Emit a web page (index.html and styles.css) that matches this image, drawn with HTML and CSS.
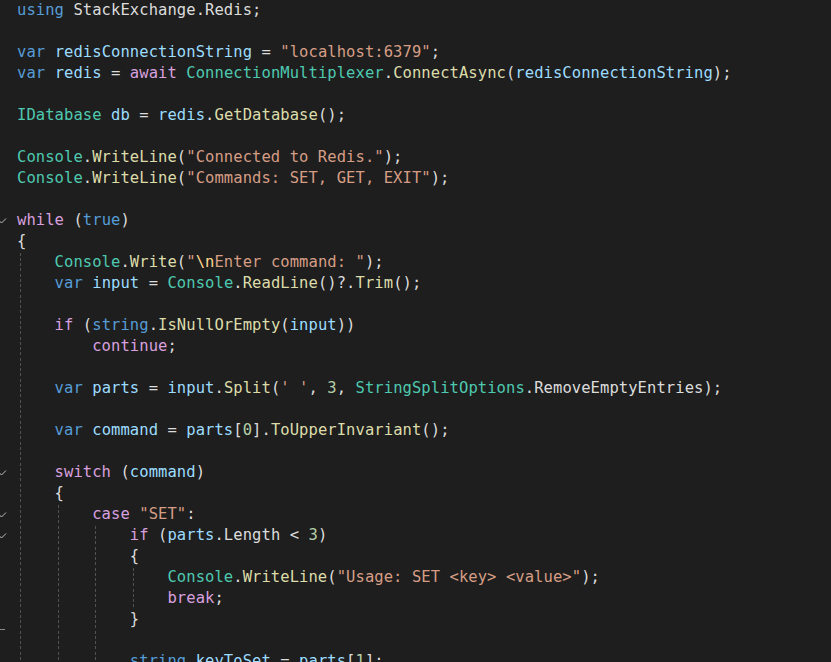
FILE: index.html
```html
<!DOCTYPE html>
<html>
<head>
<meta charset="utf-8">
<link rel="stylesheet" href="styles.css">
</head>
<body>
<div class="editor">
  <div class="gutter">
    <div class="g"></div><div class="g"></div><div class="g"></div><div class="g"></div><div class="g"></div>
    <div class="g"></div><div class="g"></div><div class="g"></div><div class="g"></div><div class="g"></div>
    <div class="g"><svg class="chev" width="7" height="8" viewBox="0 0 7 8"><path d="M-1 3.5 L1.5 6 L6 1.5" fill="none" stroke="#bdbdbd" stroke-width="1"/></svg></div>
    <div class="g"></div><div class="g"></div><div class="g"></div><div class="g"></div>
    <div class="g"></div><div class="g"></div><div class="g"></div><div class="g"></div><div class="g"></div>
    <div class="g"></div><div class="g"></div>
    <div class="g"><svg class="chev" width="7" height="8" viewBox="0 0 7 8"><path d="M-1 3.5 L1.5 6 L6 1.5" fill="none" stroke="#bdbdbd" stroke-width="1"/></svg></div>
    <div class="g"></div>
    <div class="g"><svg class="chev" width="7" height="8" viewBox="0 0 7 8"><path d="M-1 3.5 L1.5 6 L6 1.5" fill="none" stroke="#bdbdbd" stroke-width="1"/></svg></div>
    <div class="g"><svg class="chev" width="7" height="8" viewBox="0 0 7 8"><path d="M-1 3.5 L1.5 6 L6 1.5" fill="none" stroke="#bdbdbd" stroke-width="1"/></svg></div>
    <div class="g"></div><div class="g"></div><div class="g"></div>
    <div class="g end"></div>
    <div class="g"></div><div class="g"></div>
  </div>
  <div class="code">
<div class="ln"><span class="k">using</span> StackExchange.Redis;</div>
<div class="ln"></div>
<div class="ln"><span class="k">var</span> <span class="v">redisConnectionString</span> = <span class="s">"localhost:6379"</span>;</div>
<div class="ln"><span class="k">var</span> <span class="v">redis</span> = <span class="c">await</span> <span class="t">ConnectionMultiplexer</span>.<span class="m">ConnectAsync</span>(<span class="v">redisConnectionString</span>);</div>
<div class="ln"></div>
<div class="ln"><span class="t">IDatabase</span> <span class="v">db</span> = <span class="v">redis</span>.<span class="m">GetDatabase</span>();</div>
<div class="ln"></div>
<div class="ln"><span class="t">Console</span>.<span class="m">WriteLine</span>(<span class="s">"Connected to Redis."</span>);</div>
<div class="ln"><span class="t">Console</span>.<span class="m">WriteLine</span>(<span class="s">"Commands: SET, GET, EXIT"</span>);</div>
<div class="ln"></div>
<div class="ln"><span class="c">while</span> (<span class="k">true</span>)</div>
<div class="ln">{</div>
<div class="ln"><span class="ig">    </span><span class="t">Console</span>.<span class="m">Write</span>(<span class="s">"</span><span class="e">\n</span><span class="s">Enter command: "</span>);</div>
<div class="ln"><span class="ig">    </span><span class="k">var</span> <span class="v">input</span> = <span class="t">Console</span>.<span class="m">ReadLine</span>()?.<span class="m">Trim</span>();</div>
<div class="ln"><span class="ig">    </span></div>
<div class="ln"><span class="ig">    </span><span class="c">if</span> (<span class="k">string</span>.<span class="m">IsNullOrEmpty</span>(<span class="v">input</span>))</div>
<div class="ln"><span class="ig">    </span>    <span class="c">continue</span>;</div>
<div class="ln"><span class="ig">    </span></div>
<div class="ln"><span class="ig">    </span><span class="k">var</span> <span class="v">parts</span> = <span class="v">input</span>.<span class="m">Split</span>(<span class="s">' '</span>, <span class="n">3</span>, <span class="t">StringSplitOptions</span>.RemoveEmptyEntries);</div>
<div class="ln"><span class="ig">    </span></div>
<div class="ln"><span class="ig">    </span><span class="k">var</span> <span class="v">command</span> = <span class="v">parts</span>[<span class="n">0</span>].<span class="m">ToUpperInvariant</span>();</div>
<div class="ln"><span class="ig">    </span></div>
<div class="ln"><span class="ig">    </span><span class="c">switch</span> (<span class="v">command</span>)</div>
<div class="ln"><span class="ig">    </span>{</div>
<div class="ln"><span class="ig">    </span><span class="ig">    </span><span class="c">case</span> <span class="s">"SET"</span>:</div>
<div class="ln"><span class="ig">    </span><span class="ig">    </span><span class="ig">    </span><span class="c">if</span> (<span class="v">parts</span>.Length &lt; <span class="n">3</span>)</div>
<div class="ln"><span class="ig">    </span><span class="ig">    </span><span class="ig">    </span>{</div>
<div class="ln"><span class="ig">    </span><span class="ig">    </span><span class="ig">    </span><span class="ig">    </span><span class="t">Console</span>.<span class="m">WriteLine</span>(<span class="s">"Usage: SET &lt;key&gt; &lt;value&gt;"</span>);</div>
<div class="ln"><span class="ig">    </span><span class="ig">    </span><span class="ig">    </span><span class="ig">    </span><span class="c">break</span>;</div>
<div class="ln"><span class="ig">    </span><span class="ig">    </span><span class="ig">    </span>}</div>
<div class="ln"><span class="ig">    </span><span class="ig">    </span><span class="ig">    </span></div>
<div class="ln"><span class="ig">    </span><span class="ig">    </span><span class="ig">    </span><span class="k">string</span> <span class="v">keyToSet</span> = <span class="v">parts</span>[<span class="n">1</span>];</div>
<div class="ln"><span class="ig">    </span><span class="ig">    </span><span class="ig">    </span></div>
  </div>
</div>
</body>
</html>
```
FILE: styles.css
```css
html, body {
  margin: 0;
  padding: 0;
  background: #1e1e1e;
  overflow: hidden;
  height: 100%;
}

.editor {
  display: flex;
  width: 831px;
  height: 662px;
  overflow: hidden;
  background: #1e1e1e;
}

.gutter {
  width: 17px;
  flex: none;
}

.g {
  height: 21px;
  display: flex;
  align-items: center;
  position: relative;
}

.chev {
  display: block;
}

.g.end::after {
  content: "";
  position: absolute;
  left: 0;
  bottom: 0;
  width: 5px;
  height: 1px;
  background: #8a8a8a;
}

.code {
  flex: 1;
  font-family: "DejaVu Sans Mono", "Liberation Mono", monospace;
  font-size: 15.5px;
  letter-spacing: 0.07px;
  line-height: 21px;
  color: #dcdcdc;
}

.ln {
  height: 21px;
  white-space: pre;
}

.ig {
  background-image: repeating-linear-gradient(to bottom, #525252 0 3px, transparent 3px 5px);
  background-size: 1px 100%;
  background-position: 3px 0;
  background-repeat: no-repeat;
}

.k { color: #569cd6; }
.c { color: #d8a0df; }
.t { color: #4ec9b0; }
.m { color: #dcdcaa; }
.s { color: #d69d85; }
.e { color: #ffd68f; }
.v { color: #9cdcfe; }
.n { color: #b5cea8; }
```
